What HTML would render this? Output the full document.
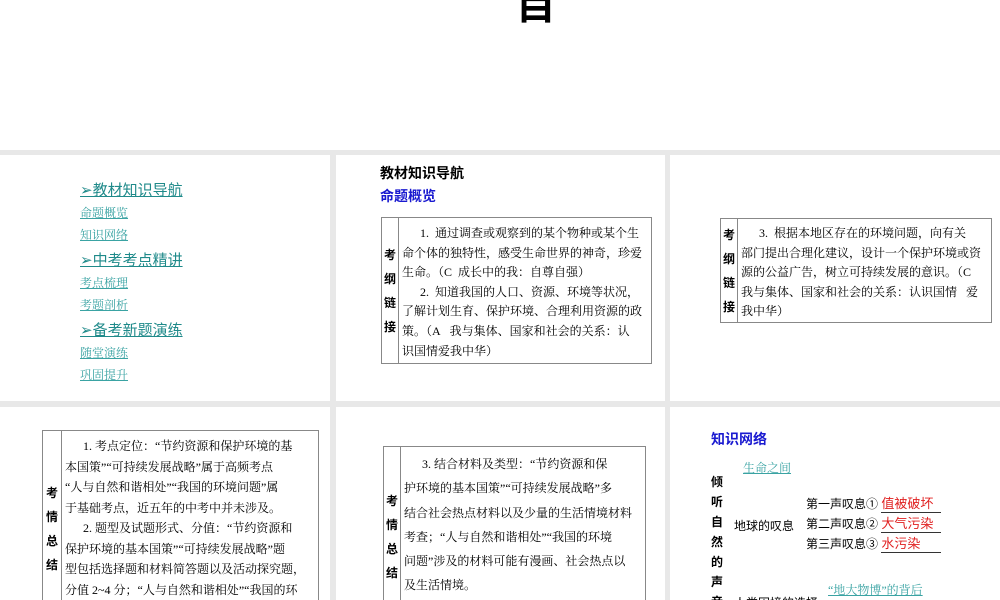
<!DOCTYPE html>
<html style="width:1000px;height:600px;overflow:hidden"><head><meta charset="utf-8"><style>
*{margin:0;padding:0;box-sizing:border-box}
html,body{width:1000px;height:600px;overflow:hidden}
body{background:#e8e8e8;position:relative;font-family:"Liberation Serif","Noto Serif CJK SC","Noto Sans CJK SC",serif;color:#000;clip-path:inset(0 0 0 0)}
.p{position:absolute;background:#fff}
.a{position:absolute;white-space:nowrap}
.h{font-family:"Liberation Sans","Noto Sans CJK SC",sans-serif;color:#1f8a8a;font-size:15px;text-decoration:underline}
.s{color:#3aa3a3;font-size:12px;text-decoration:underline}
.tb{position:absolute;border:1px solid #888;background:#fff}
.lc{position:absolute;left:0;top:0;bottom:0;border-right:1px solid #888;font-weight:bold;font-size:12px;font-family:"Liberation Sans","Noto Sans CJK SC",sans-serif;display:flex;flex-direction:column;justify-content:center;align-items:center;line-height:24px}
.tx{position:absolute;font-size:12px;line-height:20px;white-space:nowrap}
.b{font-family:"Liberation Sans","Noto Sans CJK SC",sans-serif;font-weight:bold}
.r{color:#e02020;font-size:13px;font-family:"Liberation Sans","Noto Sans CJK SC",sans-serif;border-bottom:1px solid #333;width:60px;display:inline-block}
</style></head><body>
<div class="p" style="left:0;top:0;width:1000px;height:150px"></div>
<div class="a b" style="left:516px;top:-16px;font-size:40px;line-height:44px">目</div>

<div class="p" style="left:0;top:155px;width:330px;height:246px"></div>
<div class="p" style="left:336px;top:155px;width:329px;height:246px"></div>
<div class="p" style="left:670px;top:155px;width:330px;height:246px"></div>
<div class="p" style="left:0;top:407px;width:330px;height:193px"></div>
<div class="p" style="left:336px;top:407px;width:329px;height:193px"></div>
<div class="p" style="left:670px;top:407px;width:330px;height:193px"></div>

<div class="a h" style="left:80px;top:179px">➢教材知识导航</div>
<div class="a s" style="left:80px;top:204px">命题概览</div>
<div class="a s" style="left:80px;top:226px">知识网络</div>
<div class="a h" style="left:80px;top:249px">➢中考考点精讲</div>
<div class="a s" style="left:80px;top:274px">考点梳理</div>
<div class="a s" style="left:80px;top:296px">考题剖析</div>
<div class="a h" style="left:80px;top:319px">➢备考新题演练</div>
<div class="a s" style="left:80px;top:344px">随堂演练</div>
<div class="a s" style="left:80px;top:366px">巩固提升</div>

<div class="a b" style="left:380px;top:163px;font-size:14px">教材知识导航</div>
<div class="a b" style="left:380px;top:186px;font-size:14px;color:#1a1ad0">命题概览</div>
<div class="tb" style="left:381px;top:217px;width:271px;height:147px">
<div class="lc" style="width:17px">考<br>纲<br>链<br>接</div>
<div class="tx" style="left:20px;top:6px;line-height:19.6px">&nbsp;&nbsp;&nbsp;&nbsp;&nbsp;&nbsp;1.&nbsp; 通过调查或观察到的某个物种或某个生<br>命个体的独特性，感受生命世界的神奇，珍爱<br>生命。（C&nbsp; 成长中的我：自尊自强）<br>&nbsp;&nbsp;&nbsp;&nbsp;&nbsp;&nbsp;2.&nbsp; 知道我国的人口、资源、环境等状况，<br>了解计划生育、保护环境、合理利用资源的政<br>策。（A&nbsp;&nbsp; 我与集体、国家和社会的关系：认<br>识国情爱我中华）</div>
</div>

<div class="tb" style="left:720px;top:218px;width:272px;height:105px">
<div class="lc" style="width:17px">考<br>纲<br>链<br>接</div>
<div class="tx" style="left:20px;top:5px;line-height:19.6px">&nbsp;&nbsp;&nbsp;&nbsp;&nbsp;&nbsp;3.&nbsp; 根据本地区存在的环境问题，向有关<br>部门提出合理化建议，设计一个保护环境或资<br>源的公益广告，树立可持续发展的意识。（C<br>我与集体、国家和社会的关系：认识国情&nbsp;&nbsp; 爱<br>我中华）</div>
</div>

<div class="tb" style="left:42px;top:430px;width:277px;height:170px;border-bottom:none">
<div class="lc" style="width:19px;justify-content:flex-start;padding-top:50px">考<br>情<br>总<br>结</div>
<div class="tx" style="left:22px;top:5px;line-height:20.5px">&nbsp;&nbsp;&nbsp;&nbsp;&nbsp;&nbsp;1. 考点定位：“节约资源和保护环境的基<br>本国策”“可持续发展战略”属于高频考点<br>“人与自然和谐相处”“我国的环境问题”属<br>于基础考点，近五年的中考中并未涉及。<br>&nbsp;&nbsp;&nbsp;&nbsp;&nbsp;&nbsp;2. 题型及试题形式、分值：“节约资源和<br>保护环境的基本国策”“可持续发展战略”题<br>型包括选择题和材料简答题以及活动探究题，<br>分值 2~4 分；“人与自然和谐相处”“我国的环</div>
</div>

<div class="tb" style="left:383px;top:446px;width:263px;height:154px;border-bottom:none">
<div class="lc" style="width:17px;justify-content:flex-start;padding-top:42px">考<br>情<br>总<br>结</div>
<div class="tx" style="left:20px;top:5px;line-height:24.3px">&nbsp;&nbsp;&nbsp;&nbsp;&nbsp;&nbsp;3. 结合材料及类型：“节约资源和保<br>护环境的基本国策”“可持续发展战略”多<br>结合社会热点材料以及少量的生活情境材料<br>考查；“人与自然和谐相处”“我国的环境<br>问题”涉及的材料可能有漫画、社会热点以<br>及生活情境。</div>
</div>

<div class="a b" style="left:711px;top:429px;font-size:14px;color:#1a1ad0">知识网络</div>
<div class="a s" style="left:743px;top:459px">生命之间</div>
<div class="a b" style="left:711px;top:472px;font-size:12px;line-height:20px">倾<br>听<br>自<br>然<br>的<br>声<br>音</div>
<div class="a" style="left:734px;top:517px;font-size:12px;font-family:'Liberation Sans','Noto Sans CJK SC',sans-serif">地球的叹息</div>
<div class="a" style="left:806px;top:493px;font-size:12px;font-family:'Liberation Sans','Noto Sans CJK SC',sans-serif">第一声叹息① <span class="r">值被破坏</span></div>
<div class="a" style="left:806px;top:513px;font-size:12px;font-family:'Liberation Sans','Noto Sans CJK SC',sans-serif">第二声叹息② <span class="r">大气污染</span></div>
<div class="a" style="left:806px;top:533px;font-size:12px;font-family:'Liberation Sans','Noto Sans CJK SC',sans-serif">第三声叹息③ <span class="r">水污染</span></div>
<div class="a s" style="left:828px;top:581px">“地大物博”的背后</div>
<div class="a" style="left:734px;top:594px;font-size:12px;font-family:'Liberation Sans','Noto Sans CJK SC',sans-serif">人类困境的选择</div>
</body></html>
